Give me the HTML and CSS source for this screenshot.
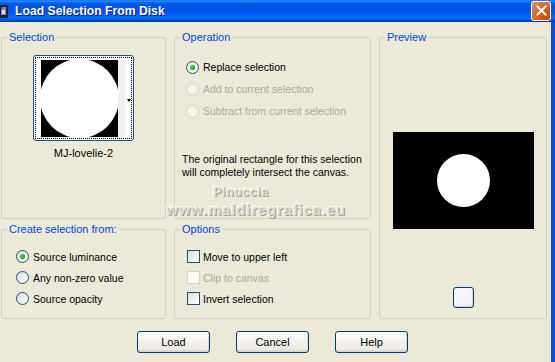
FILE: index.html
```html
<!DOCTYPE html>
<html>
<head>
    <meta charset="UTF-8">
    <title>Load Selection From Disk</title>
    <link rel="stylesheet" href="styles.css">
</head>
<body>
    <div class="window">
        <div class="titlebar">
            <svg class="app-icon" width="8" height="13" viewBox="0 0 8 13">
                <rect x="0" y="0" width="8" height="13" fill="#1a1f3a"/>
                <rect x="1" y="2" width="5" height="8" fill="#6b8fd6"/>
                <rect x="2" y="5" width="3" height="4" fill="#e8e0c0"/>
                <rect x="1" y="2" width="2" height="2" fill="#c23a2a"/>
            </svg>
            <span class="title">Load Selection From Disk</span>
            <button class="close-btn">
                <svg width="11" height="11" viewBox="0 0 11 11">
                    <path d="M1.5 1.5 L9.5 9.5 M9.5 1.5 L1.5 9.5" stroke="#fff" stroke-width="2" stroke-linecap="square"/>
                </svg>
            </button>
        </div>

        <div class="body">
            <div class="groups">
                <fieldset class="group group-selection">
                    <legend>Selection</legend>
                    <div class="thumb">
                        <div class="thumb-focus">
                            <div class="thumb-image"><div class="thumb-circle"></div></div>
                            <div class="thumb-strip"></div>
                            <div class="thumb-arrow"></div>
                        </div>
                    </div>
                    <div class="thumb-name">MJ-lovelie-2</div>
                </fieldset>

                <fieldset class="group group-operation">
                    <legend>Operation</legend>
                    <div class="choices">
                        <label class="choice"><span class="radio checked"></span>Replace selection</label>
                        <label class="choice disabled"><span class="radio"></span>Add to current selection</label>
                        <label class="choice disabled"><span class="radio"></span>Subtract from current selection</label>
                    </div>
                    <p class="note">The original rectangle for this selection<br>will completely intersect the canvas.</p>
                </fieldset>

                <fieldset class="group group-preview">
                    <legend>Preview</legend>
                    <div class="preview-canvas"><div class="preview-circle"></div></div>
                    <button class="btn small-btn"></button>
                </fieldset>

                <fieldset class="group group-source">
                    <legend>Create selection from:</legend>
                    <div class="choices">
                        <label class="choice"><span class="radio checked"></span>Source luminance</label>
                        <label class="choice"><span class="radio"></span>Any non-zero value</label>
                        <label class="choice"><span class="radio"></span>Source opacity</label>
                    </div>
                </fieldset>

                <fieldset class="group group-options">
                    <legend>Options</legend>
                    <div class="choices">
                        <label class="choice"><span class="check"></span>Move to upper left</label>
                        <label class="choice disabled"><span class="check"></span>Clip to canvas</label>
                        <label class="choice"><span class="check"></span>Invert selection</label>
                    </div>
                </fieldset>
            </div>

            <div class="buttons">
                <button class="btn">Load</button>
                <button class="btn">Cancel</button>
                <button class="btn">Help</button>
            </div>

            <div class="watermark">
                <div class="wm-name">Pinuccia</div>
                <div class="wm-site">www.maldiregrafica.eu</div>
            </div>
        </div>
    </div>
</body>
</html>
```

FILE: styles.css
```css
* {
    margin: 0;
    padding: 0;
    box-sizing: border-box;
}

body {
    font-family: "Liberation Sans", Arial, sans-serif;
    font-size: 10.5px;
    color: #000;
    background: #ece9d8;
    overflow: hidden;
}

.window {
    display: flex;
    flex-direction: column;
    height: 100vh;
}

.titlebar {
    height: 22px;
    display: flex;
    align-items: center;
    background: linear-gradient(180deg, #0058ee 0%, #3593ff 4%, #288eff 6%, #127dff 8%, #036ffc 10%, #0262ee 14%, #0057e5 20%, #0054e3 24%, #0055eb 56%, #005bf5 66%, #026afe 76%, #0062ef 86%, #0052d6 92%, #0040ab 96%, #003092 100%);
    color: white;
}

.app-icon {
    margin-top: 1px;
    margin-right: 7px;
}

.title {
    flex: 1;
    font-weight: bold;
    font-size: 12.2px;
    text-shadow: 1px 1px #0f1089;
}

.close-btn {
    width: 20px;
    height: 20px;
    margin-right: 4px;
    margin-bottom: 1px;
    border: 1px solid #fff;
    border-radius: 3px;
    background: radial-gradient(circle at 90% 90%, #cc4600 0%, #dc6527 55%, #cd7546 70%, #e3906a 100%);
    display: flex;
    align-items: center;
    justify-content: center;
}

.body {
    flex: 1;
    position: relative;
    border-right: 4px solid #0a4bdb;
    padding-top: 9px;
}

.groups {
    display: grid;
    grid-template-columns: 165px 197px 168px;
    grid-template-rows: 188px 96px;
    column-gap: 8px;
    row-gap: 4px;
    padding-left: 1px;
}

.group {
    border: 1px solid #d0d0bf;
    border-radius: 3px;
    min-width: 0;
}

.group legend {
    margin-left: 5px;
    padding: 0 2px;
    color: #0046d5;
    line-height: 13px;
    font-size: 11px;
}

.group-preview {
    grid-row: span 2;
    display: flex;
    flex-direction: column;
    align-items: center;
}

/* selection thumbnail */
.thumb {
    width: 101px;
    height: 86px;
    margin: 11px auto 0;
    border: 1px solid #1c5180;
    border-radius: 3px;
    background: #fff;
    padding: 1px;
}

.thumb-focus {
    height: 100%;
    border: 1px dotted #000;
    display: flex;
    align-items: center;
    padding-left: 5px;
}

.thumb-image {
    width: 78px;
    height: 77px;
    background: #000;
    overflow: hidden;
    display: flex;
    align-items: center;
    justify-content: center;
}

.thumb-circle {
    flex: none;
    width: 79px;
    height: 79px;
    border-radius: 50%;
    background: #fff;
}

.thumb-strip {
    width: 7px;
    height: 77px;
    background: #f0f0f0;
}

.thumb-arrow {
    margin-left: 2px;
    margin-top: 4px;
    border-left: 2.5px solid transparent;
    border-right: 2.5px solid transparent;
    border-top: 3px solid #000;
}

.thumb-name {
    text-align: center;
    line-height: 13px;
    margin-top: 6px;
    font-size: 11px;
}

/* radio buttons and check boxes */
.choices {
    display: flex;
    flex-direction: column;
}

.group-operation .choices {
    padding: 12px 0 0 11px;
}

.group-source .choices {
    padding: 10px 0 0 14px;
}

.group-options .choices {
    padding: 10px 0 0 12px;
}

.choice {
    display: flex;
    align-items: center;
    gap: 4px;
    height: 21px;
    white-space: nowrap;
}

.group-operation .choice {
    height: 22px;
}

.choice.disabled {
    color: #aca899;
}

.radio {
    width: 13px;
    height: 13px;
    border-radius: 50%;
    border: 1px solid #1c5180;
    background: linear-gradient(135deg, #dcdcd7 0%, #fff 100%);
    display: flex;
    align-items: center;
    justify-content: center;
}

.radio.checked::after {
    content: "";
    width: 5px;
    height: 5px;
    border-radius: 50%;
    background: radial-gradient(circle at 35% 35%, #55d555 0%, #21a121 60%, #1a7e1a 100%);
}

.disabled .radio {
    border-color: #d7d5c8;
    background: #f3f1e8;
}

.check {
    width: 13px;
    height: 13px;
    border: 1px solid #1c5180;
    background: linear-gradient(135deg, #dcdcd7 0%, #fff 100%);
    margin-right: -1px;
}

.disabled .check {
    border-color: #d7d5c8;
    background: #fbfaf5;
}

.note {
    line-height: 13px;
    margin-top: 31px;
    padding-left: 7px;
    white-space: nowrap;
}

/* preview */
.preview-canvas {
    width: 141px;
    height: 97px;
    margin-top: 88px;
    background: #000;
    display: flex;
    align-items: center;
    justify-content: center;
}

.preview-circle {
    width: 53px;
    height: 53px;
    border-radius: 50%;
    background: #fff;
}

/* buttons */
.btn {
    font-family: inherit;
    font-size: 11px;
    color: #000;
    border: 1px solid #003c74;
    border-radius: 3px;
    background: linear-gradient(180deg, #fff 0%, #f4f3ee 40%, #ecebe6 85%, #d6d0c5 100%);
    box-shadow: inset -1px -1px 0 rgba(214, 208, 197, 0.8);
}

.small-btn {
    width: 21px;
    height: 21px;
    margin-top: 58px;
    background: linear-gradient(135deg, #fbfbfd 0%, #eeeef2 100%);
}

.buttons {
    display: flex;
    justify-content: center;
    gap: 26px;
    margin-top: 12px;
    padding-right: 6px;
}

.buttons .btn {
    width: 73px;
    height: 22px;
}

/* watermark laid over the dialog */
.watermark {
    position: absolute;
    left: 162px;
    top: 162px;
    width: 188px;
    text-align: center;
    font-weight: bold;
    color: #dedbcd;
    text-shadow: 1px 1px 0 #9f9d92, -1px -1px 0 #fff;
    pointer-events: none;
}

.wm-name {
    font-size: 12.5px;
    line-height: 16px;
    padding-right: 30px;
    letter-spacing: 0.5px;
}

.wm-site {
    font-size: 15px;
    line-height: 20px;
    letter-spacing: 0.8px;
}
```
